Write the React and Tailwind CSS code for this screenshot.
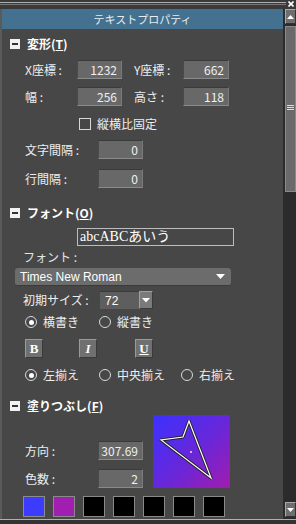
import React from "react";

const jp = { fontFamily: '"Noto Sans CJK JP", "Noto Sans", sans-serif' };

function NumBox({ value, w = "w-[45px]" }) {
  return (
    <div className={`${w} h-[19px] bg-[#686868] border-t border-l border-t-[#3a3a3a] border-l-[#4a4a4a] border-b border-r border-b-[#8a8a8a] border-r-[#7a7a7a] flex items-center justify-end pr-[4px] text-[12px] text-[#f0f0f0] leading-none`}>
      {value}
    </div>
  );
}

function Header({ children }) {
  return (
    <div className="flex items-center gap-[7px] pl-[8px] h-[16px]">
      <div className="w-[10px] h-[10px] bg-[#f2f2f2] flex items-center justify-center">
        <div className="w-[6px] h-[2px] bg-[#333]"></div>
      </div>
      <span className="text-[12px] font-bold text-white leading-none">{children}</span>
    </div>
  );
}

function Radio({ checked, label }) {
  return (
    <div className="flex items-center gap-[6px]">
      <div className="w-[12px] h-[12px] rounded-full border border-[#d8d8d8] flex items-center justify-center">
        {checked && <div className="w-[5px] h-[5px] rounded-full bg-white"></div>}
      </div>
      <span className="text-[12px] text-[#eeeeee] leading-none">{label}</span>
    </div>
  );
}

function StyleBtn({ children, cls }) {
  return (
    <div className={`w-[18px] h-[19px] bg-[#707070] border border-t-[#9a9a9a] border-l-[#9a9a9a] border-b-[#3a3a3a] border-r-[#3a3a3a] flex items-center justify-center text-[13px] text-white ${cls}`} style={{ fontFamily: '"Liberation Serif", serif' }}>
      {children}
    </div>
  );
}

function Swatch({ color }) {
  return <div className="w-[22px] h-[21px] border border-[#8a8a8a]" style={{ background: color }}></div>;
}

export default function App() {
  return (
    <div className="w-[296px] h-[524px] bg-[#2e2e2e] flex flex-col overflow-hidden" style={jp}>
      {/* top strip */}
      <div className="h-[9px] relative bg-[#3a3a3a] shrink-0">
        <div className="absolute left-0 right-[10px] top-[2px] h-[1px] bg-[#b0b0b0]"></div>
        <div className="absolute left-0 right-[10px] top-[4px] h-[1px] bg-[#777]"></div>
        <svg className="absolute right-[2px] top-[1px]" width="6" height="6" viewBox="0 0 6 6">
          <path d="M0.5 0.5 L5.5 5.5 M5.5 0.5 L0.5 5.5" stroke="#fff" strokeWidth="1.6" />
        </svg>
      </div>
      <div className="flex flex-1 min-h-0">
        {/* main panel */}
        <div className="w-[285px] bg-[#474747] border-l-2 border-l-[#5a5a5a] border-r-2 border-r-[#2c2c2c] flex flex-col">
          <div className="h-[20px] bg-[#44718f] flex items-center justify-center text-[11px] text-[#e8eef2] leading-none shrink-0">
            テキストプロパティ
          </div>
          <div className="pt-[7px] flex flex-col">
            <Header>変形(<span className="underline">T</span>)</Header>
            <div className="pl-[23px] pt-[8px] flex flex-col gap-[8px]">
              <div className="flex items-center">
                <span className="w-[52px] text-[12px] text-[#eee]">X座標 :</span>
                <NumBox value="1232" />
                <span className="ml-[12px] w-[49px] text-[12px] text-[#eee]">Y座標 :</span>
                <NumBox value="662" w="w-[46px]" />
              </div>
              <div className="flex items-center">
                <span className="w-[52px] text-[12px] text-[#eee]">幅 :</span>
                <NumBox value="256" />
                <span className="ml-[12px] w-[49px] text-[12px] text-[#eee]">高さ :</span>
                <NumBox value="118" w="w-[46px]" />
              </div>
            </div>
            <div className="pl-[77px] pt-[12px] flex items-center gap-[6px]">
              <div className="w-[12px] h-[12px] border border-[#d8d8d8]"></div>
              <span className="text-[12px] text-[#eee] leading-none">縦横比固定</span>
            </div>
            <div className="pl-[23px] pt-[10px] flex flex-col gap-[10px]">
              <div className="flex items-center">
                <span className="w-[73px] text-[12px] text-[#eee]">文字間隔 :</span>
                <NumBox value="0" />
              </div>
              <div className="flex items-center">
                <span className="w-[73px] text-[12px] text-[#eee]">行間隔 :</span>
                <NumBox value="0" />
              </div>
            </div>

            <div className="pt-[17px]">
              <Header>フォント(<span className="underline">O</span>)</Header>
            </div>
            <div className="pl-[75px] pt-[7px]">
              <div className="w-[157px] h-[18px] border border-[#bdbdbd] flex items-center pl-[2px] text-[14px] text-white leading-none" style={{ fontFamily: '"Liberation Serif", "Noto Sans CJK JP", serif' }}>
                abcABCあいう
              </div>
            </div>
            <div className="pl-[21px] pt-[2px] text-[12px] text-[#e6e6e6] leading-[18px]">フォント :</div>
            <div className="pl-[13px] pt-[2px]">
              <div className="w-[216px] h-[18px] rounded-[3px] bg-[#6c6c6c] border-b border-b-[#3a3a3a] flex items-center justify-between pl-[5px] pr-[6px]">
                <span className="text-[12px] text-white leading-none" style={{ fontFamily: '"Liberation Sans", sans-serif' }}>Times New Roman</span>
                <svg width="9" height="6" viewBox="0 0 9 6"><polygon points="0,0 9,0 4.5,5" fill="#fff" /></svg>
              </div>
            </div>
            <div className="pl-[21px] pt-[5px] flex items-center">
              <span className="w-[77px] text-[12px] text-[#eee]">初期サイズ :</span>
              <div className="w-[39px] h-[18px] bg-[#5e5e5e] border-t border-t-[#3a3a3a] flex items-center pl-[5px] text-[12px] text-white leading-none" style={{ fontFamily: '"Liberation Sans", sans-serif' }}>72</div>
              <div className="w-[14px] h-[18px] bg-[#7a7a7a] border border-t-[#a0a0a0] border-l-[#a0a0a0] border-b-[#3a3a3a] border-r-[#3a3a3a] flex items-center justify-center">
                <svg width="8" height="5" viewBox="0 0 8 5"><polygon points="0,0 8,0 4,4.5" fill="#fff" /></svg>
              </div>
            </div>
            <div className="pl-[23px] pt-[7px] flex items-center">
              <div className="w-[74px]"><Radio checked label="横書き" /></div>
              <Radio label="縦書き" />
            </div>
            <div className="pl-[23px] pt-[11px] flex items-center">
              <div className="w-[54px]"><StyleBtn cls="font-bold">B</StyleBtn></div>
              <div className="w-[56px]"><StyleBtn cls="font-bold italic">I</StyleBtn></div>
              <StyleBtn cls="font-bold underline">U</StyleBtn>
            </div>
            <div className="pl-[23px] pt-[11px] flex items-center">
              <div className="w-[74px]"><Radio checked label="左揃え" /></div>
              <div className="w-[82px]"><Radio label="中央揃え" /></div>
              <Radio label="右揃え" />
            </div>

            <div className="pt-[17px]">
              <Header>塗りつぶし(<span className="underline">F</span>)</Header>
            </div>
            <div className="pl-[23px] pt-[1px] flex">
              <div className="flex flex-col pt-[26px] gap-[9px]">
                <div className="flex items-center">
                  <span className="w-[73px] text-[12px] text-[#eee]">方向 :</span>
                  <NumBox value="307.69" />
                </div>
                <div className="flex items-center">
                  <span className="w-[73px] text-[12px] text-[#eee]">色数 :</span>
                  <NumBox value="2" />
                </div>
              </div>
              <div className="ml-[10px] w-[77px] h-[73px] relative bg-[linear-gradient(135deg,#3b32ff_0%,#6a26d8_55%,#a21cae_100%)]">
                <svg className="absolute inset-0" width="77" height="73" viewBox="0 0 77 73">
                  <polygon points="36,6 30,22 8,25 58,63" fill="none" stroke="#222" strokeWidth="3" strokeLinejoin="round" />
                  <polygon points="36,6 30,22 8,25 58,63" fill="none" stroke="#fff" strokeWidth="1.2" />
                  <rect x="37" y="36" width="2" height="2" fill="#f0a0f0" />
                </svg>
              </div>
            </div>
            <div className="pl-[21px] pt-[8px] flex gap-[8px]">
              <Swatch color="#3c3cff" />
              <Swatch color="#a01fb0" />
              <Swatch color="#000" />
              <Swatch color="#000" />
              <Swatch color="#000" />
              <Swatch color="#000" />
              <Swatch color="#000" />
            </div>
          </div>
        </div>
        {/* scrollbar */}
        <div className="w-[11px] bg-[#2b2b2b] flex flex-col">
          <div className="h-[15px] bg-[#6e6e6e] border border-t-[#aaa] border-l-[#aaa] border-b-[#333] border-r-[#333] flex items-center justify-center">
            <svg width="7" height="4" viewBox="0 0 7 4"><polygon points="0,4 7,4 3.5,0" fill="#fff" /></svg>
          </div>
          <div className="mt-[2px] h-[166px] bg-[#6a6a6a] border border-[#8a8a8a] flex flex-col items-center justify-center gap-[1px] pb-[4px]">
            <div className="w-[7px] h-[1px] bg-[#ddd]"></div>
            <div className="w-[7px] h-[1px] bg-[#ddd]"></div>
            <div className="w-[7px] h-[1px] bg-[#ddd]"></div>
          </div>
          <div className="flex-1"></div>
          <div className="h-[15px] bg-[#6e6e6e] border border-t-[#aaa] border-l-[#aaa] border-b-[#333] border-r-[#333] flex items-center justify-center mb-[2px]">
            <svg width="7" height="4" viewBox="0 0 7 4"><polygon points="0,0 7,0 3.5,4" fill="#fff" /></svg>
          </div>
        </div>
      </div>
      <div className="h-[5px] shrink-0 bg-[#333] border-t border-t-[#b0b0b0]"></div>
    </div>
  );
}
